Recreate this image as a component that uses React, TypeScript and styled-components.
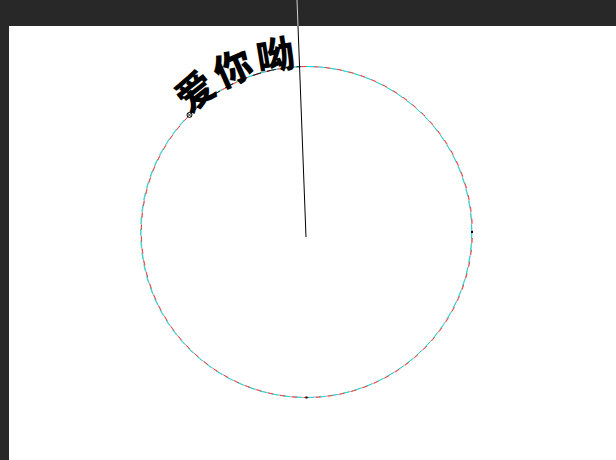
import React from "react";
import styled, { createGlobalStyle } from "styled-components";

const Global = createGlobalStyle`
  html, body { margin: 0; padding: 0; background: #282828; }
  body { width: 616px; height: 460px; overflow: hidden; font-family: "Noto Sans CJK SC", "Noto Sans", sans-serif; }
`;

const Frame = styled.div`
  position: relative;
  width: 616px;
  height: 460px;
  display: grid;
  grid-template-rows: 26px 1fr;
  background: #282828;
`;

const TopBar = styled.div`
  background: #282828;
`;

const Workspace = styled.div`
  display: grid;
  grid-template-columns: 9px 1fr;
`;

const SideBar = styled.div`
  background: #282828;
`;

const Canvas = styled.div`
  background: #ffffff;
  overflow: hidden;
`;

const Drawing = styled.svg`
  display: block;
`;

const Overlay = styled.svg`
  position: absolute;
  left: 0;
  top: 0;
  pointer-events: none;
`;

const CX = 297.5;
const CY = 206;
const R = 165.5;

const pt = (deg: number) => {
  const a = (deg * Math.PI) / 180;
  return [CX + R * Math.cos(a), CY + R * Math.sin(a)];
};

export default function App() {
  const [sx, sy] = pt(225);
  const [ex, ey] = pt(359);
  const [tx, ty] = pt(268);
  const arc = `M ${sx} ${sy} A ${R} ${R} 0 0 1 ${ex} ${ey}`;
  const textArc = `M ${sx} ${sy} A ${R} ${R} 0 0 1 ${tx} ${ty}`;
  return (
    <Frame>
      <Global />
      <TopBar />
      <Workspace>
        <SideBar />
        <Canvas>
          <Drawing width={607} height={434} viewBox="0 0 607 434">
            <defs>
              <path id="tp" d={arc} />
            </defs>
            <circle cx={CX} cy={CY} r={R} fill="none" stroke="#7a7a7a" strokeWidth={0.6} />
            <circle cx={CX - 0.4} cy={CY} r={R} fill="none" stroke="#00e0e0" strokeWidth={0.9} strokeDasharray="7 5" />
            <circle cx={CX + 0.4} cy={CY} r={R} fill="none" stroke="#ff2a2a" strokeWidth={0.9} strokeDasharray="5 7" strokeDashoffset={6} />
            <path d={textArc} fill="none" stroke="#111" strokeWidth={1} strokeDasharray="9 6" />
            <text
              fontFamily='"Noto Sans CJK SC", sans-serif'
              fontWeight={900}
              fontSize={38}
              letterSpacing={3}
              fill="#000"
            >
              <textPath href="#tp" startOffset={0}>
                爱你呦
              </textPath>
            </text>
            <circle cx={sx} cy={sy} r={2.5} fill="#fff" stroke="#000" strokeWidth={1} />
            <line x1={sx - 2} y1={sy - 2} x2={sx + 2} y2={sy + 2} stroke="#000" strokeWidth={0.8} />
            <line x1={sx - 2} y1={sy + 2} x2={sx + 2} y2={sy - 2} stroke="#000" strokeWidth={0.8} />
            <line x1={CX} y1={CY - R} x2={CX + 8} y2={CY - R} stroke="#00e0e0" strokeWidth={1} />
            <rect x={CX + R - 1} y={CY - 1} width={2} height={2} fill="#000" />
            <rect x={CX - 1} y={CY + R - 1} width={2} height={2} fill="#000" />
          </Drawing>
        </Canvas>
      </Workspace>
      <Overlay width={616} height={460} viewBox="0 0 616 460">
        <line x1={297} y1={0} x2={298} y2={26} stroke="#d0d0d0" strokeWidth={1} />
        <line x1={298} y1={26} x2={306} y2={237} stroke="#000" strokeWidth={1} />
      </Overlay>
    </Frame>
  );
}
